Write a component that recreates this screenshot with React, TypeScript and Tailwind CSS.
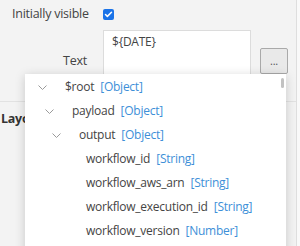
import { Check } from 'lucide-react'

const rows = [
    { name: '$root', type: 'Object', indent: 0, open: true },
    { name: 'payload', type: 'Object', indent: 1, open: true },
    { name: 'output', type: 'Object', indent: 2, open: true },
    { name: 'workflow_id', type: 'String', indent: 3 },
    { name: 'workflow_aws_arn', type: 'String', indent: 3 },
    { name: 'workflow_execution_id', type: 'String', indent: 3 },
    { name: 'workflow_version', type: 'Number', indent: 3 },
]

function Chevron() {
    return (
        <svg width="9" height="5" viewBox="0 0 9 5" className="shrink-0">
            <path d="M0.5 0.5 L4.5 4.5 L8.5 0.5" fill="none" stroke="#9a9a9a" strokeWidth="1" />
        </svg>
    )
}

export default function App() {
    return (
        <div className="relative w-[300px] h-[246px] overflow-hidden bg-[#f3f3f3] flex text-[12px] tracking-[-0.25px] text-[#444]" style={{ fontFamily: '"Open Sans", "Noto Sans", sans-serif' }}>
            <div className="flex-1 flex flex-col">
                {/* Initially visible */}
                <div className="flex items-center h-[19px] mt-[5px]">
                    <span className="w-[103px] pl-[12px] leading-none text-[12.5px]">Initially visible</span>
                    <div className="w-[11px] h-[11px] rounded-[2px] bg-[#1a73e8] flex items-center justify-center">
                        <Check size={9} strokeWidth={4} color="white" />
                    </div>
                </div>

                {/* Text */}
                <div className="flex mt-[6px]">
                    <span className="w-[87px] text-right pt-[25px] leading-none text-[12.5px]">Text</span>
                    <div className="ml-[16px] w-[148px] h-[70px] bg-white border border-[#dcdcdc] px-[8px] pt-[5px] leading-none">
                        ${'{DATE}'}
                    </div>
                    <button className="ml-[9px] mt-[18px] w-[28px] h-[26px] bg-[#e9e9e9] border border-[#a9a9a9] rounded-[2px] text-[11px] leading-none text-[#555] flex items-center justify-center pb-[2px]">
                        ...
                    </button>
                </div>

                <div className="mt-[1px] border-t border-[#e2e2e2]" />
                <div className="pl-[1px] pt-[8px] font-bold text-[#333] text-[12.5px]">Layout</div>
            </div>

            {/* page scrollbar */}
            <div className="w-[4px] border-l border-[#dedede] bg-[#f9f9f9]" />

            {/* dropdown tree */}
            <div className="absolute left-[25px] top-[74px] w-[261px] h-[190px] bg-white shadow-[0_2px_10px_rgba(0,0,0,0.18)]">
                <div className="absolute right-[2px] top-[4px] w-[3px] h-[10px] rounded-[2px] bg-[#c2c2c2]" />
                <div className="flex flex-col pt-[1px]">
                    {rows.map((r) => (
                        <div key={r.name} className="flex items-center h-[24px] whitespace-nowrap" style={{ paddingLeft: 13 + r.indent * 7 }}>
                            <div className="w-[27px] flex">
                                {r.open && <Chevron />}
                            </div>
                            <span>{r.name}</span>
                            <span className="ml-[6px] text-[#3d8fd8]">[{r.type}]</span>
                        </div>
                    ))}
                </div>
            </div>
        </div>
    )
}
